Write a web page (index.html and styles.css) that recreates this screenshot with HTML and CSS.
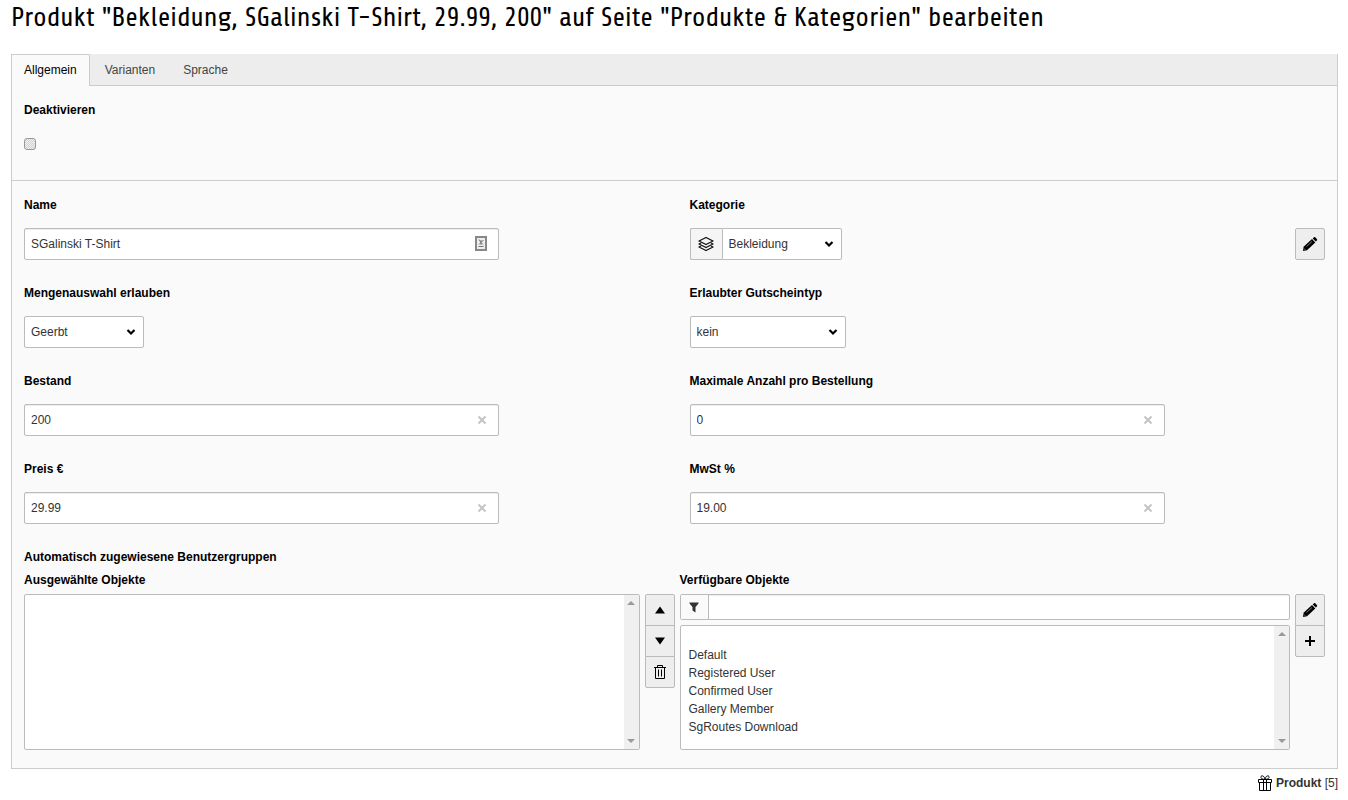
FILE: index.html
```html
<!DOCTYPE html>
<html lang="de">
<head>
    <meta charset="UTF-8">
    <meta name="viewport" content="width=device-width, initial-scale=1.0">
    <title>Produkt bearbeiten</title>
    <link rel="stylesheet" href="styles.css">
</head>
<body>
    <h1>Produkt "Bekleidung, SGalinski T-Shirt, 29.99, 200" auf Seite "Produkte &amp; Kategorien" bearbeiten</h1>

    <form class="panel">
        <nav class="tabs">
            <a href="#allgemein" class="tab active">Allgemein</a>
            <a href="#varianten" class="tab">Varianten</a>
            <a href="#sprache" class="tab">Sprache</a>
        </nav>

        <section class="section section-first" id="allgemein">
            <div class="field">
                <label for="hidden">Deaktivieren</label>
                <input type="checkbox" id="hidden" class="checkbox">
            </div>
        </section>

        <section class="section">
            <div class="fields">
                <div class="field">
                    <label for="name">Name</label>
                    <div class="input-wrap">
                        <input type="text" id="name" class="control" value="SGalinski T-Shirt">
                        <svg class="autofill" width="12" height="16" viewBox="0 0 12 16">
                            <rect x="1" y="1" width="10" height="13" fill="#eeeeee" stroke="#888888" stroke-width="2"/>
                            <path d="M4 3.500l2 3 2.500-2.500M6 4v5M4 8.500l2-2 2 2M3.500 10.500h5" fill="none" stroke="#777777"/>
                        </svg>
                    </div>
                </div>
                <div class="field">
                    <label for="category">Kategorie</label>
                    <div class="control-row">
                        <div class="input-group">
                            <span class="addon">
                                <svg width="16" height="16" viewBox="0 0 16 16" fill="none" stroke="#111" stroke-width="1.300" stroke-linejoin="round">
                                    <path d="M8 1.500l7 3.500-7 3.500L1 5z"/>
                                    <path d="M3 7L1 8l7 3.500L15 8l-2-1"/>
                                    <path d="M3 10l-2 1 7 3.500 7-3.500-2-1"/>
                                </svg>
                            </span>
                            <select id="category" class="control select">
                                <option>Bekleidung</option>
                            </select>
                        </div>
                        <button type="button" class="btn" aria-label="Kategorie bearbeiten">
                            <svg width="16" height="16" viewBox="0 0 16 16">
                                <path d="M1 15l.6-4.300L10 3l3.300 3.500-8.300 7.700z"/>
                                <path d="M10.700 2.400l1.300-1.200q.7-.5 1.300.1l1.700 1.900q.5.700-.1 1.300l-1.100 1.100z"/>
                                <path d="M4.500 10.500l5.500-5M2 12.500l1.300 1.400" stroke="#999999" stroke-width=".8" fill="none"/>
                            </svg>
                        </button>
                    </div>
                </div>
                <div class="field">
                    <label for="amount">Mengenauswahl erlauben</label>
                    <select id="amount" class="control select">
                        <option>Geerbt</option>
                    </select>
                </div>
                <div class="field">
                    <label for="voucher">Erlaubter Gutscheintyp</label>
                    <select id="voucher" class="control select select-wide">
                        <option>kein</option>
                    </select>
                </div>
                <div class="field">
                    <label for="stock">Bestand</label>
                    <div class="input-wrap">
                        <input type="text" id="stock" class="control" value="200">
                        <button type="button" class="clear" aria-label="Leeren"><svg width="10" height="10" viewBox="0 0 10 10"><path d="M1.500 1.500l7 7M8.500 1.500l-7 7"/></svg></button>
                    </div>
                </div>
                <div class="field">
                    <label for="max">Maximale Anzahl pro Bestellung</label>
                    <div class="input-wrap">
                        <input type="text" id="max" class="control" value="0">
                        <button type="button" class="clear" aria-label="Leeren"><svg width="10" height="10" viewBox="0 0 10 10"><path d="M1.500 1.500l7 7M8.500 1.500l-7 7"/></svg></button>
                    </div>
                </div>
                <div class="field">
                    <label for="price">Preis €</label>
                    <div class="input-wrap">
                        <input type="text" id="price" class="control" value="29.99">
                        <button type="button" class="clear" aria-label="Leeren"><svg width="10" height="10" viewBox="0 0 10 10"><path d="M1.500 1.500l7 7M8.500 1.500l-7 7"/></svg></button>
                    </div>
                </div>
                <div class="field">
                    <label for="vat">MwSt %</label>
                    <div class="input-wrap">
                        <input type="text" id="vat" class="control" value="19.00">
                        <button type="button" class="clear" aria-label="Leeren"><svg width="10" height="10" viewBox="0 0 10 10"><path d="M1.500 1.500l7 7M8.500 1.500l-7 7"/></svg></button>
                    </div>
                </div>
            </div>

            <div class="groups-title">Automatisch zugewiesene Benutzergruppen</div>
            <div class="groups">
                <div class="group">
                    <label for="selected">Ausgewählte Objekte</label>
                    <div class="group-row">
                        <div class="list-wrap">
                            <select id="selected" class="list" multiple></select>
                            <span class="scroller">
                                <svg width="8" height="4" viewBox="0 0 8 4"><path d="M0 4l4-4 4 4z"/></svg>
                                <svg width="8" height="4" viewBox="0 0 8 4"><path d="M0 0l4 4 4-4z"/></svg>
                            </span>
                        </div>
                        <div class="btn-group">
                            <button type="button" class="btn" aria-label="Nach oben">
                                <svg width="16" height="16" viewBox="0 0 16 16"><path d="M8 4.500l5 7H3z"/></svg>
                            </button>
                            <button type="button" class="btn" aria-label="Nach unten">
                                <svg width="16" height="16" viewBox="0 0 16 16"><path d="M8 11.500l5-7H3z"/></svg>
                            </button>
                            <button type="button" class="btn" aria-label="Entfernen">
                                <svg width="16" height="16" viewBox="0 0 16 16" fill="none" stroke="#000"><path d="M2 3.500h12M5.500 3.500v-2h5v2M3.500 3.500v11h9v-11M6.500 5.500v7M9.500 5.500v7"/></svg>
                            </button>
                        </div>
                    </div>
                </div>
                <div class="group">
                    <label for="available">Verfügbare Objekte</label>
                    <div class="group-row">
                        <div class="available">
                            <div class="filter">
                                <span class="filter-icon">
                                    <svg width="12" height="12" viewBox="0 0 12 12" fill="#333"><path d="M1.500 1.500h9v1L7.500 6v5.500l-3-2V6l-3-3.500z"/></svg>
                                </span>
                                <input type="text" class="filter-input" aria-label="Filter">
                            </div>
                            <div class="list-wrap">
                                <select id="available" class="list" multiple>
                                    <option></option>
                                    <option>Default</option>
                                    <option>Registered User</option>
                                    <option>Confirmed User</option>
                                    <option>Gallery Member</option>
                                    <option>SgRoutes Download</option>
                                </select>
                                <span class="scroller">
                                    <svg width="8" height="4" viewBox="0 0 8 4"><path d="M0 4l4-4 4 4z"/></svg>
                                    <svg width="8" height="4" viewBox="0 0 8 4"><path d="M0 0l4 4 4-4z"/></svg>
                                </span>
                            </div>
                        </div>
                        <div class="btn-group">
                            <button type="button" class="btn" aria-label="Bearbeiten">
                                <svg width="16" height="16" viewBox="0 0 16 16">
                                    <path d="M1 15l.6-4.300L10 3l3.300 3.500-8.300 7.700z"/>
                                    <path d="M10.700 2.400l1.300-1.200q.7-.5 1.300.1l1.700 1.900q.5.700-.1 1.300l-1.100 1.100z"/>
                                    <path d="M4.500 10.500l5.500-5M2 12.500l1.300 1.400" stroke="#999999" stroke-width=".8" fill="none"/>
                                </svg>
                            </button>
                            <button type="button" class="btn" aria-label="Neu">
                                <svg width="16" height="16" viewBox="0 0 16 16"><path d="M7 3h2v4h4v2H9v4H7V9H3V7h4z"/></svg>
                            </button>
                        </div>
                    </div>
                </div>
            </div>
        </section>
    </form>

    <footer class="record">
        <svg width="16" height="16" viewBox="0 0 16 16" fill="none" stroke="#000">
            <path d="M1.500 4.500h13v3h-13zM2.500 7.500v8h11v-8M6.500 4.500v11M9.500 4.500v11M8 4.500C5 4.500 3.500 3 4 1.500 5 0 7.500 1 8 4.500 8.500 1 11 0 12 1.500 12.500 3 11 4.500 8 4.500"/>
        </svg>
        <span><strong>Produkt</strong> [5]</span>
    </footer>
</body>
</html>
```
FILE: styles.css
```css
* {
    box-sizing: border-box;
}
body {
    margin: 0;
    padding: 0 10px 0 11px;
    background: #ffffff;
    color: #333333;
    font-family: "Liberation Sans", Arial, sans-serif;
    font-size: 12px;
    line-height: 18px;
}
h1 {
    margin: 0 0 18px;
    color: #000000;
    font-family: "Share", "Liberation Sans Narrow", Lato, sans-serif;
    font-size: 27px;
    font-weight: 400;
    line-height: 36px;
    white-space: nowrap;
}
input,
select,
button {
    margin: 0;
    font: inherit;
    color: inherit;
}
svg {
    display: block;
}
.panel {
    background: #fafafa;
    border: 1px solid #cccccc;
    border-top: 0;
}

/* tabs */
.tabs {
    display: flex;
    height: 32px;
    background: #ededed;
    border-bottom: 1px solid #cccccc;
}
.tab {
    padding: 7px 14px;
    color: #444444;
    text-decoration: none;
}
.tab.active {
    height: 32px;
    padding: 6px 12px 7px;
    margin-right: 1px;
    background: #fafafa;
    border-top: 1px solid #cccccc;
    border-right: 1px solid #cccccc;
    border-radius: 0 2px 0 0;
    color: #000000;
}

/* fields */
.section {
    padding: 15px 12px 18px;
}
.section-first {
    padding-bottom: 30px;
    border-bottom: 1px solid #cccccc;
}
.fields {
    display: grid;
    grid-template-columns: 1fr 1fr;
    gap: 24px 30px;
}
.field label,
.group label,
.groups-title {
    display: block;
    color: #000000;
    font-weight: bold;
}
.field label {
    margin-bottom: 14px;
}
.checkbox {
    display: block;
    appearance: none;
    width: 12px;
    height: 12px;
    margin: 19px 0 0;
    border: 1px solid #999999;
    border-radius: 3px;
    background: repeating-conic-gradient(#d2d2d2 0 25%, #f0f0f0 0 50%) 0 0 / 2px 2px;
}
.control {
    height: 32px;
    padding: 0 6px;
    background: #ffffff;
    border: 1px solid #bbbbbb;
    border-radius: 2px;
}
.input-wrap {
    position: relative;
    max-width: 475px;
}
.input-wrap .control {
    display: block;
    width: 100%;
    padding-right: 32px;
    box-shadow: inset 0 1px 1px rgba(0,0,0,0.075);
}
.clear,
.autofill {
    position: absolute;
    top: 8px;
    right: 12px;
}
.clear {
    top: 11px;
    padding: 0;
    background: none;
    border: 0;
}
.clear path {
    fill: none;
    stroke: #c4c4c4;
    stroke-width: 2;
}
.select {
    display: block;
    width: 120px;
    appearance: none;
    background: #ffffff url("data:image/svg+xml,%3Csvg xmlns='http://www.w3.org/2000/svg' width='10' height='8' viewBox='0 0 10 8'%3E%3Cpath d='M1.500 2L5 5.500 8.500 2' fill='none' stroke='%23000' stroke-width='2.200'/%3E%3C/svg%3E") no-repeat right 7px center;
}
.select-wide {
    width: 156px;
}
.control-row {
    display: flex;
    justify-content: space-between;
}
.input-group {
    display: flex;
}
.input-group .select {
    border-radius: 0 2px 2px 0;
}
.addon {
    display: flex;
    align-items: center;
    justify-content: center;
    width: 32px;
    background: #f5f5f5;
    border: 1px solid #bbbbbb;
    border-right: 0;
    border-radius: 2px 0 0 2px;
}
.btn {
    display: flex;
    align-items: center;
    justify-content: center;
    width: 30px;
    height: 32px;
    padding: 0;
    background: #eeeeee;
    border: 1px solid #bbbbbb;
    border-radius: 2px;
}

/* user groups */
.groups-title {
    margin: 24px 0 5px;
}
.groups {
    display: grid;
    grid-template-columns: 1fr 1fr;
}
.group + .group {
    padding-left: 5px;
}
.group label {
    margin-bottom: 5px;
}
.group-row {
    display: flex;
    gap: 5px;
    height: 156px;
}
.available {
    flex: 1;
    display: flex;
    flex-direction: column;
    gap: 5px;
}
.list-wrap {
    flex: 1;
    display: flex;
    min-height: 0;
    background: #ffffff;
    border: 1px solid #bbbbbb;
    border-radius: 2px;
}
.list {
    flex: 1;
    padding: 4px 6px;
    background: none;
    border: 0;
    overflow-y: auto;
    scrollbar-width: none;
}
.list option {
    height: 18px;
    min-height: 18px;
    padding: 0 2px;
    line-height: 18px;
}
.scroller {
    display: flex;
    flex-direction: column;
    justify-content: space-between;
    align-items: center;
    width: 15px;
    padding: 6px 0;
    background: #f0f0f0;
}
.scroller path {
    fill: #999999;
}
.filter {
    display: flex;
    height: 26px;
    background: #ffffff;
    border: 1px solid #bbbbbb;
    border-radius: 2px;
}
.filter-icon {
    display: flex;
    align-items: center;
    justify-content: center;
    width: 28px;
    background: #fafafa;
    border-right: 1px solid #bbbbbb;
}
.filter-input {
    flex: 1;
    padding: 0 6px;
    background: none;
    border: 0;
    box-shadow: inset 0 1px 1px rgba(0,0,0,0.075);
}
.btn-group .btn {
    border-radius: 0;
}
.btn-group .btn + .btn {
    margin-top: -1px;
}
.btn-group .btn:first-child {
    border-radius: 2px 2px 0 0;
}
.btn-group .btn:last-child {
    border-radius: 0 0 2px 2px;
}

.record {
    display: flex;
    justify-content: flex-end;
    align-items: center;
    gap: 3px;
    margin-top: 5px;
}
```
